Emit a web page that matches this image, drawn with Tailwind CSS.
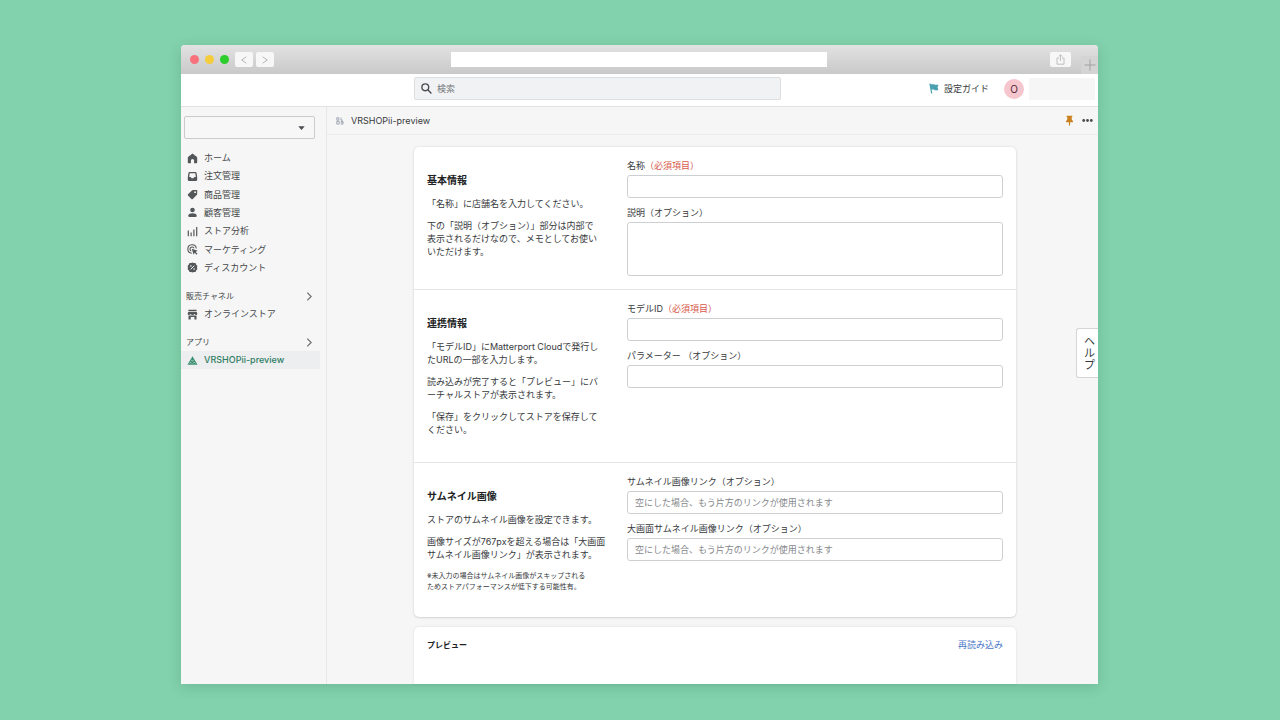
<!DOCTYPE html>
<html lang="ja">
<head>
<meta charset="utf-8">
<meta name="viewport" content="width=device-width, initial-scale=1">
<title>VRSHOPii-preview</title>
<script src="https://cdn.jsdelivr.net/npm/@tailwindcss/browser@4"></script>
</head>
<body class="flex min-h-screen bg-[#82d2ad] pt-[45px] pr-[182px] pb-9 pl-[181px] font-['Inter','Noto_Sans_CJK_JP',sans-serif] text-[9px] leading-[12px] text-[#37393c]">
<div class="relative flex flex-1 flex-col rounded-t bg-[#f6f6f6] shadow-[0_3px_14px_rgba(0,60,30,0.16)]">

  <!-- Browser toolbar -->
  <div class="flex h-[29px] items-center rounded-t bg-linear-to-b from-[#e2e2e2] to-[#c9c9c9] pl-[9px]">
    <div class="flex gap-[6px]">
      <span class="size-[9px] rounded-full bg-[#f8727c]"></span>
      <span class="size-[9px] rounded-full bg-[#f5cc3c]"></span>
      <span class="size-[9px] rounded-full bg-[#2bce2b]"></span>
    </div>
    <div class="ml-[6px] flex gap-[3px]">
      <button type="button" aria-label="戻る" class="flex h-[15px] w-[18px] items-center justify-center rounded-xs bg-[#f7f7f7]"><svg width="8" height="8" viewBox="0 0 8 8" fill="none" stroke="#b4b4b4"><path d="M6.300.8 1.700 4l4.600 3.200"/></svg></button>
      <button type="button" aria-label="進む" class="flex h-[15px] w-[18px] items-center justify-center rounded-xs bg-[#f7f7f7]"><svg width="8" height="8" viewBox="0 0 8 8" fill="none" stroke="#b4b4b4"><path d="M1.700.8 6.300 4 1.700 7.200"/></svg></button>
    </div>
    <input type="text" aria-label="アドレス" class="ml-[177px] h-[15px] min-w-0 flex-1 bg-white">
    <button type="button" aria-label="共有" class="ml-[223px] flex h-[15px] w-[21px] items-center justify-center rounded-xs bg-[#f7f7f7]"><svg width="9" height="11" viewBox="0 0 9 11" fill="none" stroke="#b9b9b9" stroke-width=".9"><path d="M3 4H1v6.200h7V4H6M4.500 7V.9M2.700 2.600 4.500.8l1.800 1.800"/></svg></button>
    <button type="button" aria-label="新規タブ" class="ml-[10px] flex h-[18px] w-[17px] items-center justify-center self-end bg-[#d4d4d4]"><svg width="12" height="12" viewBox="0 0 12 12" stroke="#a2a2a2"><path d="M6 .5v11M.5 6h11"/></svg></button>
  </div>

  <!-- Top bar -->
  <header class="flex h-[33px] items-center border-b border-[#e1e1e1] bg-white pr-[3px] pb-[3px] pl-[233px]">
    <label class="flex h-[23px] flex-1 items-center gap-[5px] rounded-xs border border-[#dcdee0] bg-[#f1f2f4] pl-[6px]">
      <svg width="11" height="11" viewBox="0 0 11 11" fill="none" stroke="#4a4d50" stroke-width="1.400"><circle cx="4.300" cy="4.300" r="3.400"/><path d="m6.800 6.800 3.600 3.600"/></svg>
      <input type="search" aria-label="検索" placeholder="検索" class="min-w-0 flex-1 bg-transparent outline-none placeholder:text-[#75797c]">
    </label>
    <a href="#" class="ml-[148px] flex items-center gap-[5px]">
      <svg width="10" height="11" viewBox="0 0 10 11"><path d="M.3.600h1.200l.2.700h3.500l.5.500h3.900L8.500 4.300l.9 2.900H5.600l-.5-.7H2.600l.7 4H2.100z" fill="#4a9fb0"/></svg>
      設定ガイド
    </a>
    <button type="button" aria-label="アカウント" class="ml-[15px] size-5 rounded-full bg-[#f6c6cf] text-[10px] text-[#4f2733]">O</button>
    <div class="ml-[5px] h-[22px] w-[66px] bg-[#f6f6f6]"></div>
  </header>

  <div class="flex flex-1">
    <!-- Sidebar -->
    <nav class="w-[146px] shrink-0 border-r border-[#e7e8e9] pt-[9px] text-[#45484a]">
      <div class="relative mr-[11px] ml-[3px]">
        <select aria-label="ストア" class="h-[23px] w-full appearance-none rounded-xs border border-[#c9cccf] bg-[#f7f7f7]"><option></option></select>
        <svg class="pointer-events-none absolute top-[10px] right-[10px]" width="7" height="4" viewBox="0 0 7 4"><path d="M.3.200h6.400L3.500 3.900z" fill="#4a4d50"/></svg>
      </div>
      <ul class="mt-[10px] flex h-32 flex-col justify-between pl-[6px]">
        <li><a href="#" class="flex h-[18px] items-center gap-[6px]"><svg width="11" height="11" viewBox="0 0 11 11" fill="#54575a"><path d="M5.500.6 1.300 3.800q-.5.400-.5 1v4.700q0 .8.8.8h2.300V7.500a1.600 1.600 0 0 1 3.200 0v2.800h2.300q.8 0 .8-.8V4.800q0-.6-.5-1z"/></svg>ホーム</a></li>
        <li><a href="#" class="flex h-[18px] items-center gap-[6px]"><svg width="11" height="11" viewBox="0 0 11 11" fill="#54575a"><path fill-rule="evenodd" d="M2.700 1h5.600q1.100 0 1.300 1l.6 4.200v2.500q0 1.300-1.300 1.300H2.100Q.8 10 .8 8.700V6.200L1.400 2q.2-1 1.300-1zm0 1.300L2.200 6h1.500l.9 1.300h1.800L7.300 6h1.500l-.5-3.700z"/></svg>注文管理</a></li>
        <li><a href="#" class="flex h-[18px] items-center gap-[6px]"><svg width="11" height="11" viewBox="0 0 11 11" fill="#54575a"><path fill-rule="evenodd" d="M6 1.100 9.500.9q.8 0 .8.8l-.2 3.500q0 .5-.4.8L5.800 9.900q-.7.600-1.400 0L1 6.600q-.6-.7 0-1.400l3.900-3.700q.4-.4 1.100-.4zm2.100 3a.95.95 0 1 0 0-1.900.95.95 0 0 0 0 1.900z"/></svg>商品管理</a></li>
        <li><a href="#" class="flex h-[18px] items-center gap-[6px]"><svg width="11" height="11" viewBox="0 0 11 11" fill="#54575a"><circle cx="5.500" cy="3" r="2.300"/><path d="M1.300 8.500q.5-2.200 4.200-2.200t4.200 2.200q.1 1.500-1.200 1.500h-6q-1.300 0-1.200-1.500z"/></svg>顧客管理</a></li>
        <li><a href="#" class="flex h-[18px] items-center gap-[6px]"><svg width="11" height="11" viewBox="0 0 11 11" stroke="#54575a" stroke-width="1.200"><path d="M1.300 4.500v5.700M4.100 6.500v3.700M6.900 3.500v6.700M9.700 1v9.200"/></svg>ストア分析</a></li>
        <li><a href="#" class="flex h-[18px] items-center gap-[6px]"><svg width="11" height="11" viewBox="0 0 11 11" fill="none" stroke="#54575a" stroke-width="1.100"><path d="M4.800 9.300A4.250 4.250 0 1 1 9.300 4.500M4.200 7A2.100 2.100 0 1 1 7 4.200"/><path d="m4.800 4.800 5.900 1.900-2.100 1.200 1.900 1.900-.9.900-1.900-1.900-1.100 2z" fill="#54575a" stroke="none"/></svg>マーケティング</a></li>
        <li><a href="#" class="flex h-[18px] items-center gap-[6px]"><svg width="11" height="11" viewBox="0 0 11 11"><path d="m5.500.4 1.400.6 1.600.1.600 1.500 1.200 1.100-.2 1.800.2 1.800-1.200 1.100-.6 1.500-1.600.1-1.400.6-1.400-.6-1.600-.1-.6-1.500L.7 7.300l.2-1.800-.2-1.800 1.200-1.100.6-1.500L4.100 1z" fill="#54575a"/><path d="m3.700 7.300 3.600-3.600" stroke="#f6f6f6"/><circle cx="3.900" cy="4" r=".8" fill="#f6f6f6"/><circle cx="7.100" cy="7" r=".8" fill="#f6f6f6"/></svg>ディスカウント</a></li>
      </ul>
      <button type="button" class="mt-[13px] flex h-3 w-full items-center justify-between pr-3 pl-[5px] text-[8px]">販売チャネル<svg width="9" height="9" viewBox="0 0 9 9" fill="none" stroke="#6b6e71" stroke-width="1.200"><path d="m2.300.7 3.800 3.800-3.800 3.800"/></svg></button>
      <a href="#" class="mt-[3px] flex h-[18px] items-center gap-[6px] pl-[6px]"><svg width="11" height="11" viewBox="0 0 11 11" fill="#54575a"><path d="M1.400.8h8.200v1.500H1.400zM1.300 2.900h8.400l.7 1.800q-.3 1.200-1.300 1.200T7.500 5q-.7.900-2 .9t-2-.9q-.6.900-1.600.9T.6 4.700z"/><path d="M1.500 6.500h8v3.900H7.400V8H3.700v2.400H1.500z"/></svg>オンラインストア</a>
      <button type="button" class="mt-[13px] flex h-3 w-full items-center justify-between pr-3 pl-[5px] text-[8px]">アプリ<svg width="9" height="9" viewBox="0 0 9 9" fill="none" stroke="#6b6e71" stroke-width="1.200"><path d="m2.300.7 3.800 3.800-3.800 3.800"/></svg></button>
      <a href="#" class="mt-[3px] mr-[6px] flex h-[18px] items-center gap-[6px] bg-[#edeeef] pl-[6px] font-medium text-[#2f7d64]"><svg width="11" height="11" viewBox="0 0 11 11"><path d="M5.500 1.200 10.500 9.800H.5z" fill="#3b8f70"/><path d="M4.200 5.200l1.300.8 1.300-.8M2.400 8.500l1.300-1.300 1.200 1.300M6.200 8.500l1-1.300 1.300 1.300" fill="none" stroke="#edeeef" stroke-width=".6"/></svg>VRSHOPii-preview</a>
    </nav>

    <main class="flex min-w-0 flex-1 flex-col">
      <div class="flex h-7 items-center border-b border-[#ececec] pr-[5px] pl-[9px]">
        <svg width="8" height="8" viewBox="0 0 8 8" fill="none" stroke="#9aa0b0" stroke-width=".9"><path d="M.8.700h2v2.500h-2zM.8 4.400h2.400v2.700H.8zM5 .6v2.600h1.700M4.800 4.400h2.200v2.700H4.800M4.800 5.700H7"/></svg>
        <h1 class="ml-[7px]">VRSHOPii-preview</h1>
        <button type="button" aria-label="固定" class="ml-auto"><svg width="9" height="11" viewBox="0 0 9 11"><path d="M1.700.8h5.600v1.300l-.7.500.3 2.300 1 .9v1.400H5.100v3l-.6.500-.6-.5v-3H1.100V5.800l1-.9.300-2.300-.7-.5z" fill="#c9821f"/></svg></button>
        <button type="button" aria-label="その他" class="ml-2"><svg width="11" height="11" viewBox="0 0 11 11" fill="#4a4d50"><circle cx="1.700" cy="5.500" r="1.400"/><circle cx="5.500" cy="5.500" r="1.400"/><circle cx="9.300" cy="5.500" r="1.400"/></svg></button>
      </div>

      <form class="flex flex-1 flex-col gap-[10px] pt-3 pr-[82px] pl-[87px]">
        <div class="divide-y divide-[#e4e5e7] rounded-[5px] bg-white shadow-[0_0_3px_rgba(23,24,24,0.10),0_1px_2px_rgba(0,0,0,0.10)]">
          <section class="flex px-[13px]">
            <div class="w-[200px] shrink-0 space-y-[9px] pt-[26px] pb-[26px] leading-[13px]">
              <h2 class="mb-[10px] text-[10px] leading-[14px] font-bold text-[#202223]">基本情報</h2>
              <p>「名称」に店舗名を入力してください。</p>
              <p>下の「説明（オプション）」部分は内部で<br>表示されるだけなので、メモとしてお使い<br>いただけます。</p>
            </div>
            <div class="flex flex-1 flex-col py-[13px]">
              <label for="name">名称<span class="text-[#d8584a]">（必須項目）</span></label>
              <input id="name" type="text" class="mt-[3px] h-[23px] rounded-[3px] border border-[#cdd0d3] px-2">
              <label for="desc" class="mt-[9px]">説明（オプション）</label>
              <textarea id="desc" class="mt-[3px] h-[54px] resize-none rounded-[3px] border border-[#cdd0d3] px-2"></textarea>
            </div>
          </section>
          <section class="flex px-[13px]">
            <div class="w-[200px] shrink-0 space-y-[9px] pt-[26px] pb-[26px] leading-[13px]">
              <h2 class="mb-[10px] text-[10px] leading-[14px] font-bold text-[#202223]">連携情報</h2>
              <p>「モデルID」にMatterport Cloudで発行し<br>たURLの一部を入力します。</p>
              <p>読み込みが完了すると「プレビュー」にバ<br>ーチャルストアが表示されます。</p>
              <p>「保存」をクリックしてストアを保存して<br>ください。</p>
            </div>
            <div class="flex flex-1 flex-col py-[13px]">
              <label for="model">モデルID<span class="text-[#d8584a]">（必須項目）</span></label>
              <input id="model" type="text" class="mt-[3px] h-[23px] rounded-[3px] border border-[#cdd0d3] px-2">
              <label for="param" class="mt-[9px]">パラメーター （オプション）</label>
              <input id="param" type="text" class="mt-[3px] h-[23px] rounded-[3px] border border-[#cdd0d3] px-2">
            </div>
          </section>
          <section class="flex px-[13px]">
            <div class="w-[200px] shrink-0 space-y-[9px] pt-[26px] pb-[25px] leading-[13px]">
              <h2 class="mb-[10px] text-[10px] leading-[14px] font-bold text-[#202223]">サムネイル画像</h2>
              <p>ストアのサムネイル画像を設定できます。</p>
              <p>画像サイズが767pxを超える場合は「大画面<br>サムネイル画像リンク」が表示されます。</p>
              <p class="text-[7px] leading-[11px]">※未入力の場合はサムネイル画像がスキップされる<br>ためストアパフォーマンスが低下する可能性有。</p>
            </div>
            <div class="flex flex-1 flex-col py-[13px]">
              <label for="thumb">サムネイル画像リンク（オプション）</label>
              <input id="thumb" type="text" placeholder="空にした場合、もう片方のリンクが使用されます" class="mt-[3px] h-[23px] rounded-[3px] border border-[#cdd0d3] px-[7px] placeholder:text-[#85888b]">
              <label for="thumb-large" class="mt-[9px]">大画面サムネイル画像リンク（オプション）</label>
              <input id="thumb-large" type="text" placeholder="空にした場合、もう片方のリンクが使用されます" class="mt-[3px] h-[23px] rounded-[3px] border border-[#cdd0d3] px-[7px] placeholder:text-[#85888b]">
            </div>
          </section>
        </div>
        <section class="flex flex-1 items-start justify-between rounded-t-[5px] bg-white px-[13px] pt-3 shadow-[0_0_3px_rgba(23,24,24,0.10)]">
          <h2 class="text-[8px] font-bold text-[#202223]">プレビュー</h2>
          <a href="#" class="text-[#4a76c9]">再読み込み</a>
        </section>
      </form>
    </main>
  </div>

  <button type="button" class="absolute top-[283px] right-0 flex h-[50px] w-[22px] items-center justify-center rounded-l-[3px] border border-r-0 border-[#d3d5d7] bg-white pl-1 text-[11px] leading-[12px]"><span class="w-[11px] break-all">ヘルプ</span></button>
</div>
</body>
</html>
